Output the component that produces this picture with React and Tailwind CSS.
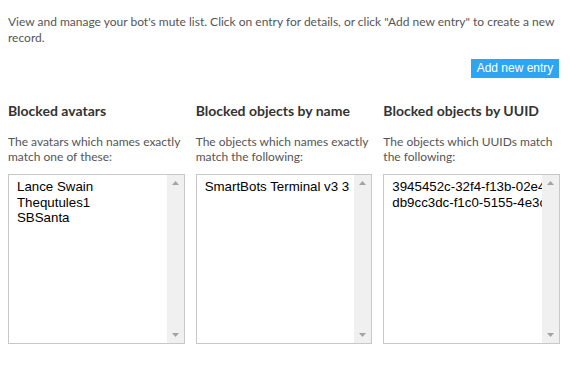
export default function App() {
  const cols = [
    {
      title: "Blocked avatars",
      desc: "The avatars which names exactly match one of these:",
      items: ["Lance Swain", "Thequtules1", "SBSanta"],
    },
    {
      title: "Blocked objects by name",
      desc: "The objects which names exactly match the following:",
      items: ["SmartBots Terminal v3 3"],
    },
    {
      title: "Blocked objects by UUID",
      desc: "The objects which UUIDs match the following:",
      items: [
        "3945452c-32f4-f13b-02e4-0c8a6a3b1f2e",
        "db9cc3dc-f1c0-5155-4e3c-d8a9b7c6e5f4",
      ],
    },
  ];
  return (
    <div className="w-[570px] h-[365px] bg-white pl-[8px] pr-[10px] pt-[14px] text-[#555]" style={{ fontFamily: 'Lato, sans-serif' }}>
      <p className="text-[12px] leading-[16px] w-[560px] whitespace-nowrap">
        View and manage your bot's mute list. Click on entry for details, or click "Add new entry" to create a new
        <br />
        record.
      </p>
      <div className="flex justify-end mt-[13px]">
        <button
          className="h-[19px] w-[88px] bg-[#2ea5f2] text-white text-[12px] leading-[19px] text-center mr-[1px]"
          style={{ fontFamily: '"Liberation Sans", Arial, sans-serif' }}
        >
          Add new entry
        </button>
      </div>
      <div className="grid grid-cols-3 gap-x-[11px] mt-[25px]">
        {cols.map((c) => (
          <div key={c.title} className="flex flex-col">
            <div className="text-[14px] font-bold leading-[16px] text-[#333]">{c.title}</div>
            <div className="mt-[15px] text-[12px] leading-[15px] h-[30px]">{c.desc}</div>
            <div className="mt-[10px] h-[170px] border border-[#c8c8c8] flex">
              <div
                className="flex-1 min-w-0 overflow-hidden pl-[8px] pt-[4px] text-[13.3px] leading-[15.5px] text-black"
                style={{ fontFamily: '"Liberation Sans", Arial, sans-serif' }}
              >
                {c.items.map((it) => (
                  <div key={it} className="whitespace-nowrap">{it}</div>
                ))}
              </div>
              <div className="w-[17px] bg-[#f0f0f0] flex flex-col items-center justify-between py-[6px]">
                <svg width="7" height="4" viewBox="0 0 7 4"><path d="M3.5 0 L7 4 L0 4 Z" fill="#a3a3a3" /></svg>
                <svg width="7" height="4" viewBox="0 0 7 4"><path d="M0 0 L7 0 L3.5 4 Z" fill="#a3a3a3" /></svg>
              </div>
            </div>
          </div>
        ))}
      </div>
    </div>
  );
}
